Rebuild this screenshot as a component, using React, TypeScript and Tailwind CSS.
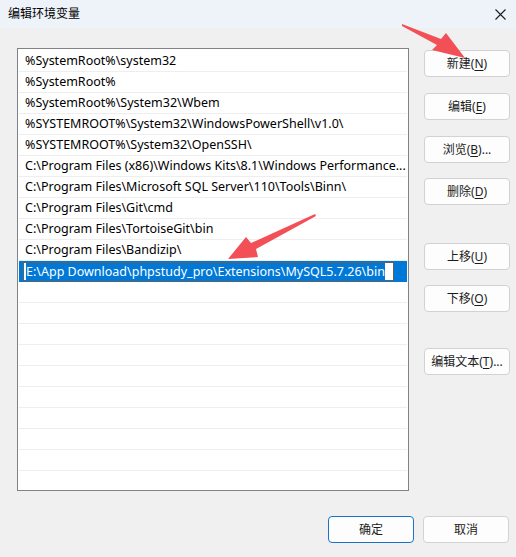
import React from 'react'

const FONT = '"Noto Sans", "Noto Sans CJK SC", sans-serif'

const PATHS = [
  '%SystemRoot%\\system32',
  '%SystemRoot%',
  '%SystemRoot%\\System32\\Wbem',
  '%SYSTEMROOT%\\System32\\WindowsPowerShell\\v1.0\\',
  '%SYSTEMROOT%\\System32\\OpenSSH\\',
  'C:\\Program Files (x86)\\Windows Kits\\8.1\\Windows Performance...',
  'C:\\Program Files\\Microsoft SQL Server\\110\\Tools\\Binn\\',
  'C:\\Program Files\\Git\\cmd',
  'C:\\Program Files\\TortoiseGit\\bin',
  'C:\\Program Files\\Bandizip\\',
]

const EDITING = 'E:\\App Download\\phpstudy_pro\\Extensions\\MySQL5.7.26\\bin'

function Btn({ children, primary = false }: { children: React.ReactNode; primary?: boolean }) {
  return (
    <button
      type="button"
      className={`flex h-[27px] w-[86px] items-center justify-center rounded-[4px] border bg-[#fdfdfd] text-[12px] text-[#1b1b1b] ${primary ? 'border-[#1a73c9]' : 'border-[#d2d2d2]'}`}
    >
      {children}
    </button>
  )
}

function Key({ k }: { k: string }) {
  return (
    <>
      (<span className="underline underline-offset-2">{k}</span>)
    </>
  )
}

export default function App() {
  const blanks = Array.from({ length: 11 })

  return (
    <div className="relative h-[557px] w-[516px] overflow-hidden bg-[#f0f0f0]" style={{ fontFamily: FONT }}>
      <div className="flex h-[28px] items-center justify-between bg-[#eef3f9] pl-[8px] pr-[2px]">
        <span className="text-[12px] text-black">编辑环境变量</span>
        <div className="flex h-[28px] w-[28px] items-center justify-center">
          <svg width="11" height="11" viewBox="0 0 11 11">
            <path d="M0.5 0.5 L10.5 10.5 M10.5 0.5 L0.5 10.5" stroke="#1c1c1c" strokeWidth="1.1" />
          </svg>
        </div>
      </div>

      <div className="flex pl-[17px] pt-[20px]">
        <div className="h-[443px] w-[392px] overflow-hidden border border-[#7f8388] bg-white px-[1px] pt-[2px]">
          {PATHS.map((p) => (
            <div key={p} className="flex h-[21px] items-center whitespace-nowrap border-b border-[#eeeeee] pl-[6px] pr-[4px] text-[12.5px] text-black">
              {p}
            </div>
          ))}
          <div className="flex h-[21px] items-stretch bg-[#0078d7] py-[1px] pl-[4px] pr-[13px]">
            <div className="flex flex-1 items-center border border-[#616161] bg-white pl-[2px]">
              <span className="whitespace-nowrap bg-[#0078d7] text-[12.5px] leading-[17px] text-white">{EDITING}</span>
            </div>
          </div>
          {blanks.map((_, i) => (
            <div key={i} className="h-[21px] border-b border-[#eeeeee]" />
          ))}
        </div>

        <div className="ml-[15px] flex flex-col pt-[2px]">
          <Btn>新建<Key k="N" /></Btn>
          <div className="h-[16px]" />
          <Btn>编辑<Key k="E" /></Btn>
          <div className="h-[16px]" />
          <Btn>浏览<Key k="B" />...</Btn>
          <div className="h-[15px]" />
          <Btn>删除<Key k="D" /></Btn>
          <div className="h-[38px]" />
          <Btn>上移<Key k="U" /></Btn>
          <div className="h-[15px]" />
          <Btn>下移<Key k="O" /></Btn>
          <div className="h-[36px]" />
          <Btn>编辑文本<Key k="T" />...</Btn>
        </div>
      </div>

      <div className="flex justify-end gap-[9px] pr-[7px] pt-[25px]">
        <div className="h-[28px]">
          <Btn primary>确定</Btn>
        </div>
        <Btn>取消</Btn>
      </div>

      <svg className="pointer-events-none absolute left-0 top-0" width="516" height="557" viewBox="0 0 516 557">
        <polygon points="402,24 441,39 446,33 465,58 432,50 437,45 402,26" fill="#f34f57" />
        <polygon points="315,214 316,216 256,249 258,257 228,259 246,237 251,243" fill="#f34f57" />
      </svg>
    </div>
  )
}
